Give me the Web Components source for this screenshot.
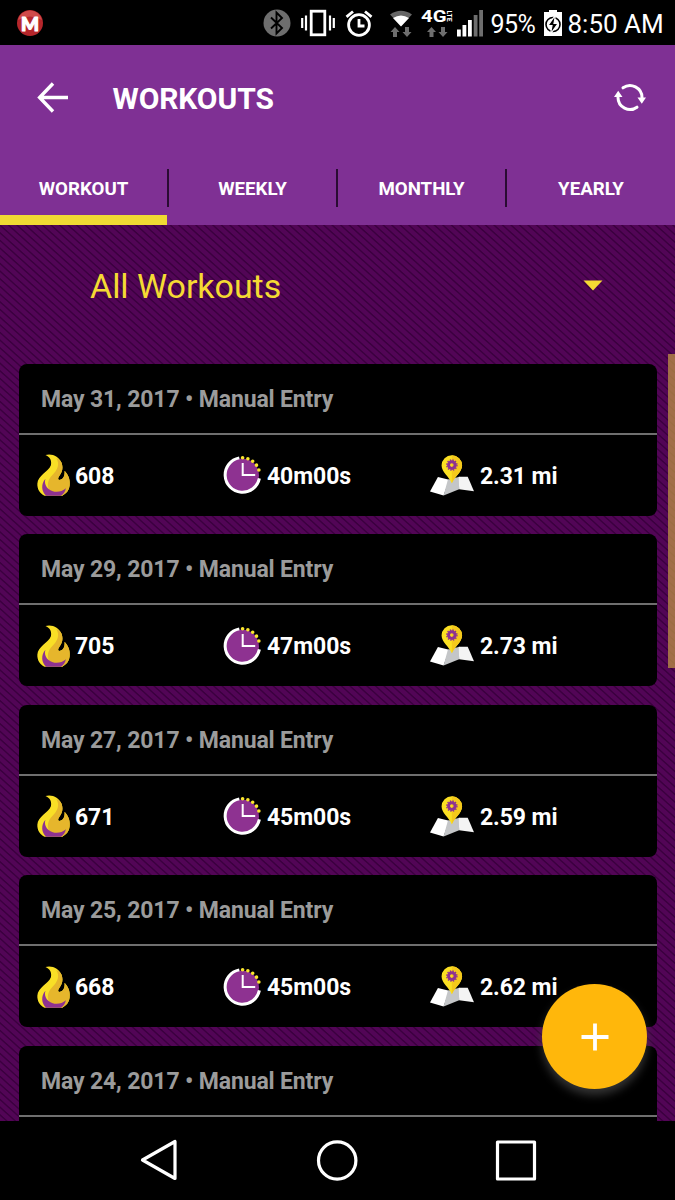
<!DOCTYPE html>
<html lang="en">
<head>
<meta charset="utf-8">
<title>Workouts</title>
<style>
    html, body {
        margin: 0;
        height: 100%;
        background: #000;
        overflow: hidden;
    }
</style>
</head>
<body>
<workout-app></workout-app>
<script>
const icons = {
    logo: `<svg width="28" height="28" viewBox="0 0 28 28">
        <circle cx="14" cy="14" r="13" fill="#b5262b"/>
        <path d="M2 11a12.3 12.3 0 0 1 24 0q-12-7-24 0z" fill="#cf4a4a"/>
        <text x="5" y="21.500" textLength="18" lengthAdjust="spacingAndGlyphs" font-family="Lato" font-weight="900" font-size="19" fill="#fff" stroke="#fff" stroke-width="1.200" stroke-linejoin="round">M</text></svg>`,
    bluetooth: `<svg width="28" height="28" viewBox="0 0 28 28">
        <circle cx="14" cy="14" r="13.500" fill="#6e6e6e"/>
        <path d="M8 8.500l11 10.500-5.500 5.500V3.500L19 9 8 19.500" fill="none" stroke="#000" stroke-width="1.900"/></svg>`,
    vibrate: `<svg width="34" height="28" viewBox="0 0 34 28" fill="none" stroke="#fff">
        <rect x="10.200" y="2.200" width="13.600" height="23.600" stroke-width="2.800"/>
        <path d="M1.200 9v10M5 6.500v15M29 6.500v15M32.800 9v10" stroke-width="2.200"/></svg>`,
    alarm: `<svg width="28" height="28" viewBox="0 0 28 28" fill="none" stroke="#fff" stroke-width="2.800">
        <circle cx="14" cy="16" r="10.400"/>
        <path d="M14 10v7h5.500M1.500 7.800l6.500-5.300M26.500 7.800L20 2.500"/></svg>`,
    wifi: `<svg width="24" height="28" viewBox="0 0 24 28">
        <path d="M1 5.500Q12-2 23 5.500L12 17z" fill="#666"/>
        <path d="M4 9Q12 4 20 9L12 17.500z" fill="#fff"/>
        <path d="M6 18l4.500 5H8v5H4v-5H1.500zM18 28l-4.500-5H16v-5h4v5h2.500z" fill="#6e6e6e"/></svg>`,
    lte: `<svg width="32" height="28" viewBox="0 0 32 28">
        <g fill="#fff" font-family="Roboto" font-weight="700">
            <text x="0" y="12.500" font-size="16" textLength="25.500" lengthAdjust="spacingAndGlyphs">4G</text>
            <text transform="translate(26.300 1.500) rotate(90)" font-size="7" textLength="11" lengthAdjust="spacingAndGlyphs">LTE</text>
        </g>
        <path d="M10.500 18l4.500 5h-2.500v5h-4v-5H6zM22 28l-4.500-5H20v-5h4v5h2.500z" fill="#6e6e6e"/></svg>`,
    signal: `<svg width="26" height="28" viewBox="0 0 26 28">
        <path d="M0 20.500h3.800v7H0zM5.500 16H9.300V27.500H5.500zM11 11h3.800V27.500H11z" fill="#fff"/>
        <path d="M16.700 6h3.800V27.500h-3.800zM22.200 1h3.800V27.500h-3.800z" fill="#6e6e6e"/></svg>`,
    battery: `<svg width="18" height="28" viewBox="0 0 18 28">
        <path d="M5 1h8v2h5v24H0V3h5z" fill="#fff"/>
        <circle cx="9" cy="15.500" r="7" fill="none" stroke="#000" stroke-width="1.600"/>
        <path d="M11.500 6L4 16.500h4L6.500 25 14 14.500h-4z" fill="#000" stroke="#fff" stroke-width="1.200"/></svg>`,
    back: `<svg width="32" height="32" viewBox="0 0 32 32" fill="none" stroke="#fff" stroke-width="3.400">
        <path d="M31 15.500H3M16 1.500L2.600 15.500l13.400 14"/></svg>`,
    refresh: `<svg width="32" height="32" viewBox="0 0 32 32">
        <path d="M9 5.800A12 12 0 0 1 28 15.500M23 25.200A12 12 0 0 1 4 15.500" fill="none" stroke="#fff" stroke-width="3" stroke-linecap="round"/>
        <path d="M23.500 15.500h8.500l-4.200 6.200zM0 15h8.500L4.200 8.800z" fill="#fff"/></svg>`,
    flame: `<svg width="33" height="42" viewBox="0 0 98 125">
        <path d="M25 3C44-3 66 8 73 26c7 20-1 32-9 43-3 6 0 9 5 8 10-3 14-12 13-27 16 18 16 32 15 44-2 15-10 24-22 30H22C8 118 0 104 1 88 2 64 34 52 41 34 45 20 38 8 25 3z" fill="#f9df26"/>
        <path d="M57 12c12 18 4 36-12 51-14 14-16 32-8 45l38 16c13-6 20-15 22-30 1-12 1-26-15-44 1 15-3 24-13 27-5 1-8-2-5-8 8-11 16-23 9-43-3-6-8-11-16-14z" fill="#e6b62c"/>
        <path d="M25 74c-6 18 8 36 27 38 14 1 24-1 34-10-3 12-8 18-15 22H27c-14-12-16-34-2-50z" fill="#8e3291"/></svg>`,
    clock: `<svg width="38" height="38" viewBox="0 0 38 38">
        <path d="M19.500 2.500A16.500 16.500 0 1 0 36 19.300q-1-15-16.500-16.800z" fill="#8e3291"/>
        <path d="M16.300 1.900A17.300 17.300 0 1 0 36.400 22.400" fill="none" stroke="#fff" stroke-width="3"/>
        <path d="M19.700 7v12h12.500" fill="none" stroke="#fff" stroke-width="2"/>
        <path d="M19.600 1.800A17.200 17.200 0 0 1 36.600 19.300" fill="none" stroke="#fae52e" stroke-width="3.600" stroke-linecap="round" stroke-dasharray="0 5.400"/></svg>`,
    map: `<svg width="44" height="41" viewBox="0 0 133 123">
        <path d="M24 66l34 8-17 48L0 110z" fill="#fff"/>
        <path d="M54 74l35-9-1 38-47 19z" fill="#c4c6c8"/>
        <path d="M87 65h27l19 44-45-6z" fill="#f4f4f4"/>
        <path d="M66 0a31 31 0 0 1 31 31c0 20-22 32-31 54C57 63 35 51 35 31A31 31 0 0 1 66 0z" fill="#fbe022"/>
        <path d="M66 0a31 31 0 0 1 31 31c0 20-22 32-31 54z" fill="#f5c91c"/>
        <circle cx="66" cy="30" r="10" fill="none" stroke="#8e3291" stroke-width="9"/>
        <circle cx="66" cy="30" r="15.500" fill="none" stroke="#8e3291" stroke-width="4" stroke-dasharray="4 4.120"/></svg>`,
    caret: `<svg width="20" height="10" viewBox="0 0 20 10"><path d="M.5-.5h19L10 9.500z" fill="#f5da33"/></svg>`,
    plus: `<svg width="28" height="28" viewBox="0 0 28 28"><path d="M14 .5v27M.5 14h27" stroke="#fff" stroke-width="3.800"/></svg>`,
    navBack: `<svg width="40" height="44" viewBox="0 0 40 44"><path d="M36 2.500v37L3.500 21z" fill="none" stroke="#fff" stroke-width="3.200" stroke-linejoin="round"/></svg>`,
    navHome: `<svg width="44" height="44" viewBox="0 0 44 44"><circle cx="22.200" cy="21.500" r="18.700" fill="none" stroke="#fff" stroke-width="3.200"/></svg>`,
    navRecent: `<svg width="44" height="44" viewBox="0 0 44 44"><rect x="3.500" y="3" width="37" height="37" fill="none" stroke="#fff" stroke-width="3.200" stroke-linejoin="round"/></svg>`,
};

class UiIcon extends HTMLElement {
    constructor() {
        super();
        this.attachShadow({ mode: 'open' });
    }

    connectedCallback() {
        this.shadowRoot.innerHTML = `
            <style>
                :host { display: block; flex: none; }
                svg { display: block; overflow: visible; }
            </style>
            ${icons[this.getAttribute('name')]}
        `;
    }
}
customElements.define('ui-icon', UiIcon);

const statusTemplate = document.createElement('template');
statusTemplate.innerHTML = `
    <style>
        :host {
            display: flex;
            align-items: center;
            box-sizing: border-box;
            height: 45px;
            padding-left: 16px;
            background: #000;
            color: #fff;
            font-size: 26px;
            white-space: nowrap;
        }
        [name=logo] { margin-right: auto; }
        [name=bluetooth] { margin-right: 10px; }
        [name=vibrate] { margin-right: 10px; }
        [name=alarm] { margin-right: 16px; }
        [name=wifi] { margin-right: 8px; }
        [name=lte] { margin-right: 4px; }
        [name=signal] { margin-right: 8px; }
        .level { width: 53px; font-size: 25px; letter-spacing: -.6px; }
        .time { width: 107.500px; margin-left: 6px; }
        span { padding-top: 3px; }
    </style>
    <ui-icon name="logo"></ui-icon>
    <ui-icon name="bluetooth"></ui-icon>
    <ui-icon name="vibrate"></ui-icon>
    <ui-icon name="alarm"></ui-icon>
    <ui-icon name="wifi"></ui-icon>
    <ui-icon name="lte"></ui-icon>
    <ui-icon name="signal"></ui-icon>
    <span class="level">95%</span>
    <ui-icon name="battery"></ui-icon>
    <span class="time">8:50 AM</span>
`;

class StatusBar extends HTMLElement {
    constructor() {
        super();
        this.attachShadow({ mode: 'open' });
        this.shadowRoot.appendChild(statusTemplate.content.cloneNode(true));
    }
}
customElements.define('status-bar', StatusBar);

const toolbarTemplate = document.createElement('template');
toolbarTemplate.innerHTML = `
    <style>
        :host {
            display: flex;
            align-items: center;
            box-sizing: border-box;
            height: 105px;
            padding: 0 29px 0 37px;
            color: #fff;
        }
        h1 {
            flex: 1;
            margin: 2px 0 0 43.500px;
            font-size: 30px;
            font-weight: 700;
            letter-spacing: -.1px;
        }
    </style>
    <ui-icon name="back"></ui-icon>
    <h1><slot></slot></h1>
    <ui-icon name="refresh"></ui-icon>
`;

class AppToolbar extends HTMLElement {
    constructor() {
        super();
        this.attachShadow({ mode: 'open' });
        this.shadowRoot.appendChild(toolbarTemplate.content.cloneNode(true));
    }
}
customElements.define('app-toolbar', AppToolbar);

const tabTemplate = document.createElement('template');
tabTemplate.innerHTML = `
    <style>
        :host {
            display: grid;
            grid-template-columns: 1fr 2px;
            align-items: center;
            height: 75px;
            box-sizing: border-box;
            color: #fff;
            font-size: 18.700px;
            font-weight: 700;
            text-align: center;
        }
        :host([active]) {
            background: linear-gradient(#f0da33, #f0da33) 0 100% / 167px 10px no-repeat;
        }
        span { padding-top: 2px; }
        i {
            height: 38px;
            background: #2a0c33;
        }
        :host(:last-child) span { padding-left: 2px; }
        :host(:last-child) i { background: none; }
    </style>
    <span><slot></slot></span>
    <i></i>
`;

class TabItem extends HTMLElement {
    constructor() {
        super();
        this.attachShadow({ mode: 'open' });
        this.shadowRoot.appendChild(tabTemplate.content.cloneNode(true));
    }
}
customElements.define('tab-item', TabItem);

const cardTemplate = document.createElement('template');
cardTemplate.innerHTML = `
    <style>
        :host {
            display: block;
            height: 152px;
            flex: none;
            border-radius: 8px;
            background: #000;
            font-size: 23px;
            font-weight: 700;
            overflow: hidden;
        }
        header {
            display: flex;
            align-items: center;
            box-sizing: border-box;
            height: 71px;
            padding-left: 22px;
            border-bottom: 2px solid #6f6f6f;
            color: #9b9b9b;
            letter-spacing: -.14px;
        }
        .stats {
            display: grid;
            grid-template-columns: 186px 207px 1fr;
            align-items: center;
            height: 81px;
            padding-left: 18px;
            color: #fff;
            letter-spacing: -.08px;
        }
        .stats div {
            display: flex;
            align-items: center;
            gap: 6px;
        }
        .stats div:first-child { gap: 5px; }
        span { padding-top: 2px; }
    </style>
    <header><span><slot></slot></span></header>
    <div class="stats">
        <div><ui-icon name="flame"></ui-icon><span class="calories"></span></div>
        <div><ui-icon name="clock"></ui-icon><span class="time"></span></div>
        <div><ui-icon name="map"></ui-icon><span class="distance"></span></div>
    </div>
`;

class WorkoutCard extends HTMLElement {
    constructor() {
        super();
        this.attachShadow({ mode: 'open' });
        this.shadowRoot.appendChild(cardTemplate.content.cloneNode(true));
    }

    connectedCallback() {
        for (const key of ['calories', 'time', 'distance']) {
            this.shadowRoot.querySelector('.' + key).textContent = this.getAttribute(key);
        }
    }
}
customElements.define('workout-card', WorkoutCard);

const navTemplate = document.createElement('template');
navTemplate.innerHTML = `
    <style>
        :host {
            display: flex;
            justify-content: space-between;
            align-items: center;
            box-sizing: border-box;
            height: 79px;
            padding: 0 137px 0 139px;
            background: #000;
        }
    </style>
    <ui-icon name="navBack"></ui-icon>
    <ui-icon name="navHome"></ui-icon>
    <ui-icon name="navRecent"></ui-icon>
`;

class NavBar extends HTMLElement {
    constructor() {
        super();
        this.attachShadow({ mode: 'open' });
        this.shadowRoot.appendChild(navTemplate.content.cloneNode(true));
    }
}
customElements.define('nav-bar', NavBar);

const appTemplate = document.createElement('template');
appTemplate.innerHTML = `
    <style>
        :host {
            display: flex;
            flex-direction: column;
            width: 675px;
            height: 1200px;
            font-family: Roboto, sans-serif;
        }
        .top { background: #7f3094; }
        nav {
            display: grid;
            grid-template-columns: 169px 169px 169px 168px;
        }
        main {
            position: relative;
            flex: 1;
            min-height: 0;
            overflow: hidden;
            background: repeating-linear-gradient(42deg, #520556 0 3.400px, #3b003f 4.300px 4.900px, #520556 5.700px);
        }
        .filter {
            display: flex;
            justify-content: space-between;
            align-items: center;
            box-sizing: border-box;
            height: 123px;
            padding: 0 72.500px 1px 90px;
            color: #f5da33;
            font-size: 34px;
            letter-spacing: -.05px;
        }
        .list {
            display: flex;
            flex-direction: column;
            gap: 18.600px;
            padding: 15.700px 18.500px 0 19px;
        }
        .scroll {
            position: absolute;
            top: 129px;
            right: 0;
            width: 7.500px;
            height: 314px;
            background: rgba(190, 145, 70, .75);
        }
        .add {
            position: absolute;
            right: 28px;
            bottom: 32px;
            display: grid;
            place-items: center;
            width: 105px;
            height: 105px;
            padding: 0;
            border: 0;
            border-radius: 50%;
            background: #ffb70b;
            box-shadow: 0 6px 10px rgba(70, 70, 70, .75);
        }
    </style>
    <status-bar></status-bar>
    <div class="top">
        <app-toolbar>WORKOUTS</app-toolbar>
        <nav>
            <tab-item active>WORKOUT</tab-item>
            <tab-item>WEEKLY</tab-item>
            <tab-item>MONTHLY</tab-item>
            <tab-item>YEARLY</tab-item>
        </nav>
    </div>
    <main>
        <div class="filter"><span>All Workouts</span><ui-icon name="caret"></ui-icon></div>
        <div class="list">
            <workout-card calories="608" time="40m00s" distance="2.31 mi">May 31, 2017 • Manual Entry</workout-card>
            <workout-card calories="705" time="47m00s" distance="2.73 mi">May 29, 2017 • Manual Entry</workout-card>
            <workout-card calories="671" time="45m00s" distance="2.59 mi">May 27, 2017 • Manual Entry</workout-card>
            <workout-card calories="668" time="45m00s" distance="2.62 mi">May 25, 2017 • Manual Entry</workout-card>
            <workout-card>May 24, 2017 • Manual Entry</workout-card>
        </div>
        <div class="scroll"></div>
        <button class="add" aria-label="Add workout"><ui-icon name="plus"></ui-icon></button>
    </main>
    <nav-bar></nav-bar>
`;

class WorkoutApp extends HTMLElement {
    constructor() {
        super();
        this.attachShadow({ mode: 'open' });
        this.shadowRoot.appendChild(appTemplate.content.cloneNode(true));
    }
}
customElements.define('workout-app', WorkoutApp);
</script>
</body>
</html>
